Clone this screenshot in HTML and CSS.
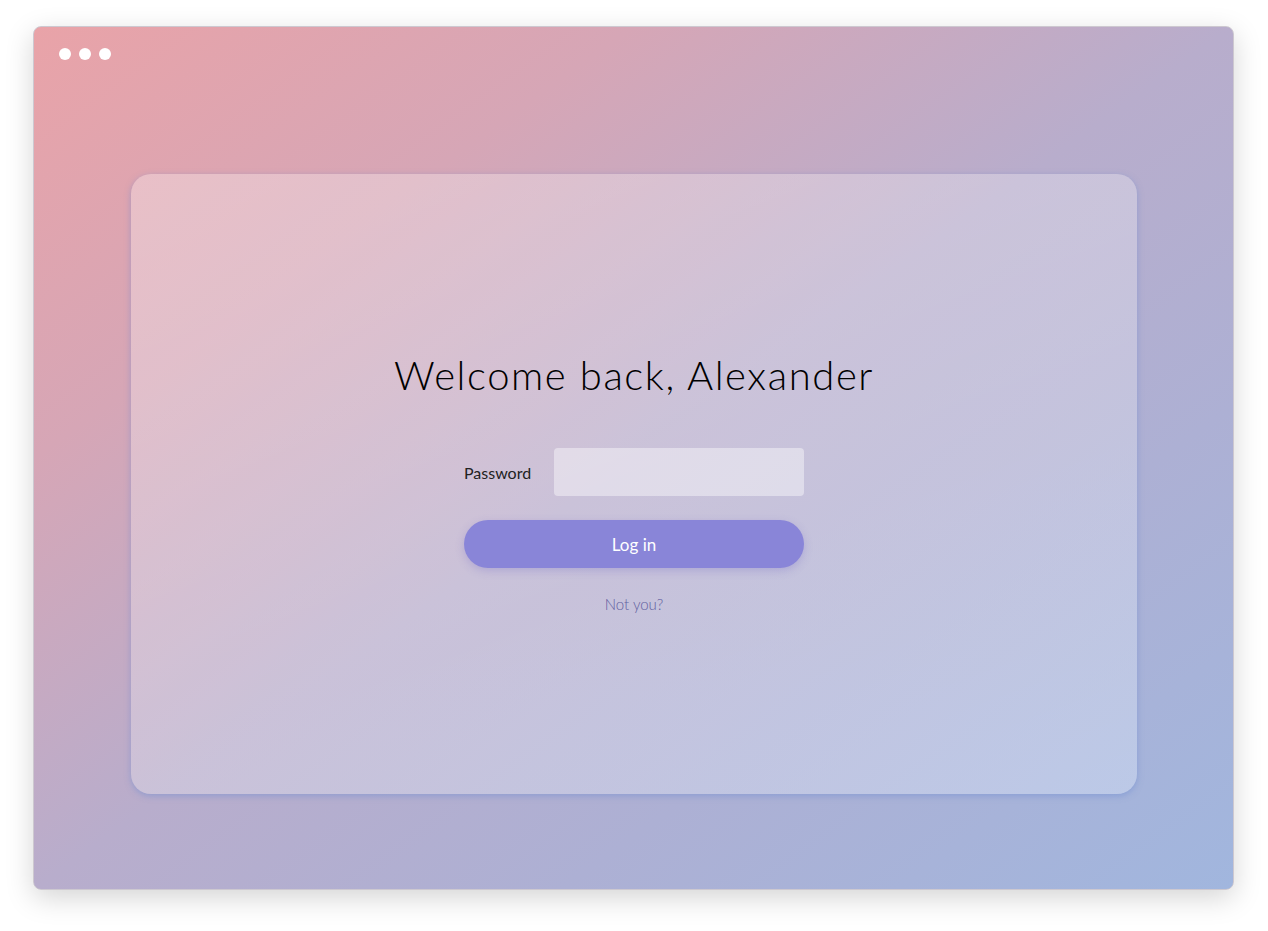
FILE: index.html
```html
<!DOCTYPE html>
<html lang="en">
<head>
    <meta charset="UTF-8">
    <meta name="viewport" content="width=device-width, initial-scale=1.0">
    <title>Welcome back</title>
    <link rel="stylesheet" href="styles.css">
</head>
<body>
    <div class="window">
        <div class="dots">
            <span></span><span></span><span></span>
        </div>
        <div class="card">
            <h1>Welcome back, Alexander</h1>
            <form class="login">
                <div class="field">
                    <label for="password">Password</label>
                    <input type="password" id="password">
                </div>
                <button type="button">Log in</button>
                <a href="#" class="not-you">Not you?</a>
            </form>
        </div>
    </div>
</body>
</html>
```

FILE: styles.css
```css
body {
    margin: 0;
    padding: 26px 34px 40px 33px;
    background: #fff;
    font-family: Lato, "Open Sans", sans-serif;
}
.window {
    height: 864px;
    box-sizing: border-box;
    border: 1px solid #cdc8d0;
    border-radius: 8px;
    background: linear-gradient(to bottom right, #e9a3a8 0%, #d6a6b6 25%, #b8adcc 50%, #adb0d4 72%, #a1b6de 100%);
    box-shadow: 0 8px 28px rgba(0, 0, 0, 0.17);
    padding: 21px 96px 95px 97px;
    display: flex;
    flex-direction: column;
}
.dots {
    display: flex;
    gap: 8px;
    margin-left: -72px;
    height: 12px;
}
.dots span {
    width: 12px;
    height: 12px;
    border-radius: 50%;
    background: #fff;
}
.card {
    margin-top: 114px;
    flex: 1;
    border-radius: 20px;
    background: linear-gradient(160deg, rgba(255, 255, 255, 0.3), rgba(255, 255, 255, 0.25) 60%, rgba(230, 240, 255, 0.35));
    box-shadow: 0 2px 6px rgba(110, 140, 210, 0.5);
    display: flex;
    flex-direction: column;
    align-items: center;
    padding-top: 176px;
}
h1 {
    margin: 0;
    font-weight: 300;
    font-size: 40px;
    letter-spacing: 1.6px;
    color: #000;
    line-height: 50px;
}
.login {
    width: 340px;
    margin-top: 48px;
    display: flex;
    flex-direction: column;
    align-items: center;
}
.field {
    width: 100%;
    display: flex;
    align-items: center;
    justify-content: space-between;
}
label {
    font-size: 16px;
    color: #222;
}
input {
    width: 250px;
    height: 48px;
    box-sizing: border-box;
    border: none;
    border-radius: 4px;
    background: rgba(255, 255, 255, 0.42);
}
button {
    width: 100%;
    height: 48px;
    margin-top: 24px;
    border: none;
    border-radius: 24px;
    background: #8985d8;
    color: #fff;
    font-family: Lato, sans-serif;
    font-size: 17px;
    box-shadow: 0 3px 8px rgba(120, 110, 200, 0.3);
    cursor: pointer;
}
.not-you {
    margin-top: 27px;
    font-size: 15px;
    font-weight: 300;
    color: #625ea0;
    text-decoration: none;
}
```
